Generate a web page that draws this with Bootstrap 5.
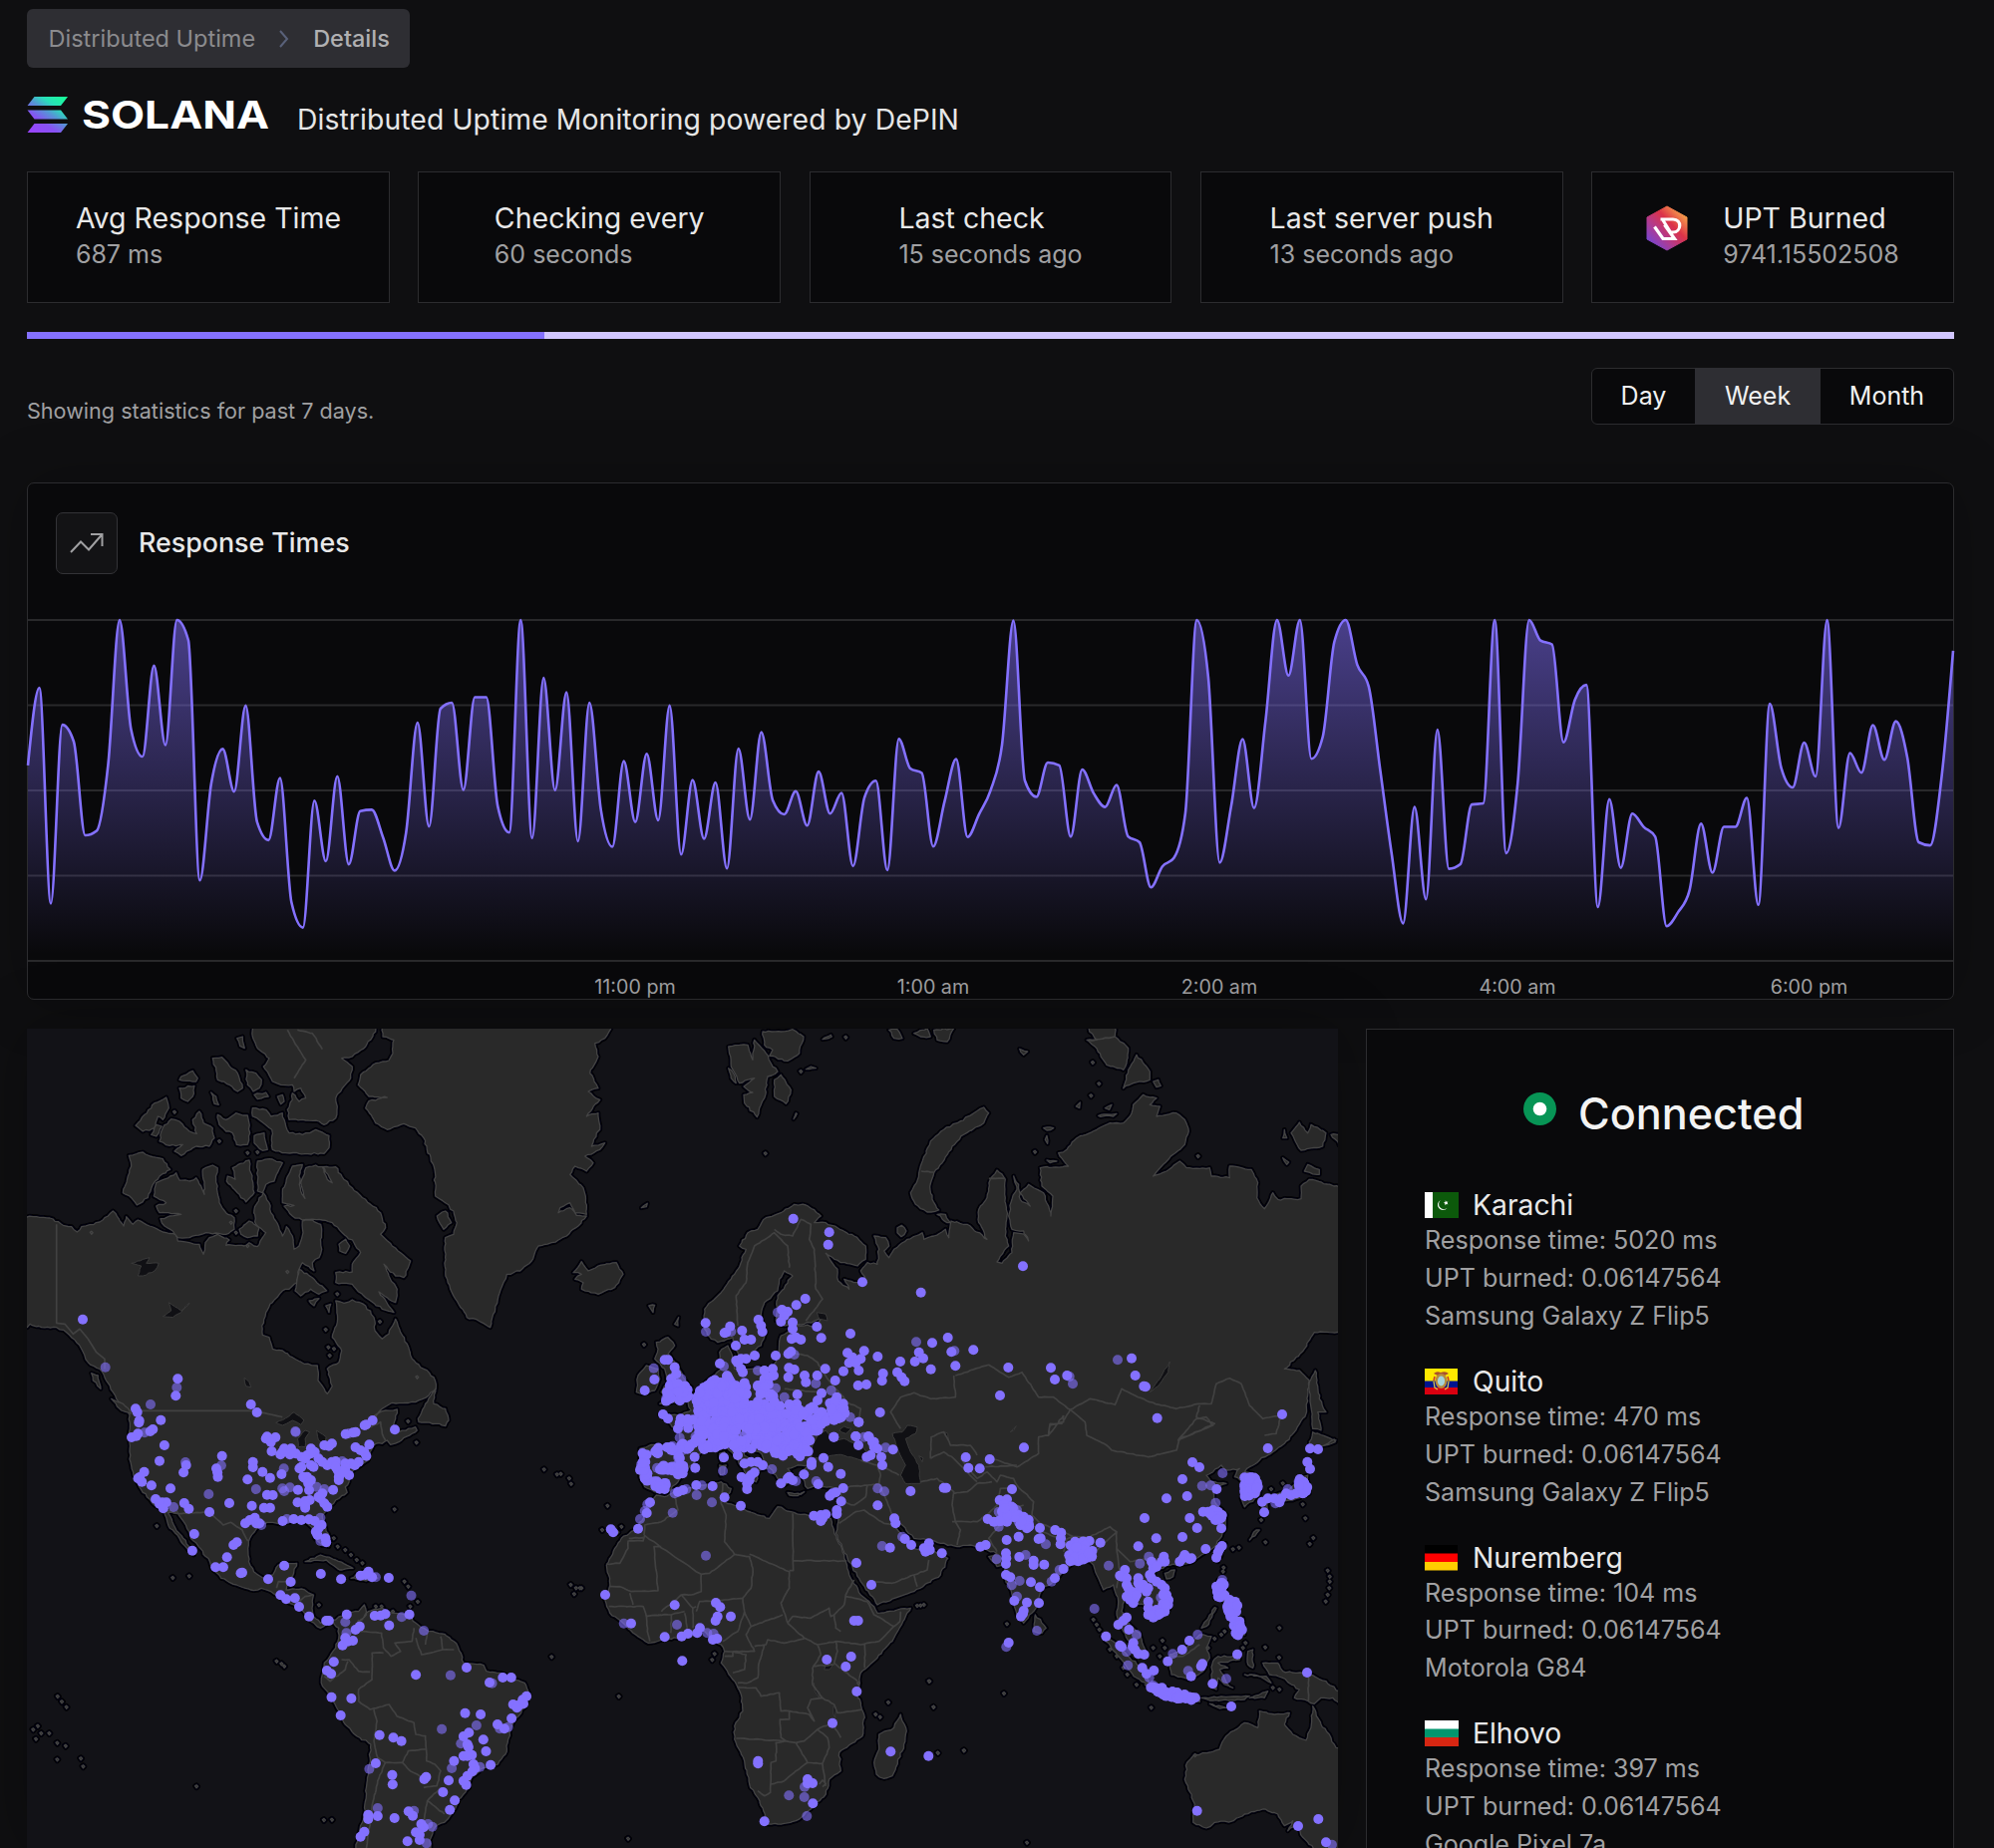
<!DOCTYPE html>
<html lang="en" data-bs-theme="dark">
<head>
<meta charset="utf-8">
<meta name="viewport" content="width=device-width, initial-scale=1">
<title>Distributed Uptime Details</title>
<link href="https://cdn.jsdelivr.net/npm/bootstrap@5.3.0/dist/css/bootstrap.min.css" rel="stylesheet">
<style>
:root{--line:#2c2c2f;--panel:#09090b;--violet:#8471ff}
body{background:#0f0f11;font-family:Inter,"Liberation Sans",sans-serif;height:1854px;overflow:hidden;color:#e6e6e6}
.page{padding:9px 40px 0 27px;height:1854px;overflow:hidden}
.crumbs{background:#2e2e33;border-radius:6px;height:59px;width:384px;padding-left:21.5px;font-size:23.5px;color:#8b8b8e}
.crumbs .here{color:#b0b0b2;font-weight:500}
.brand{height:48px;margin-top:24px}
.tagline{font-size:28.300px;line-height:48px;color:#e6e6e6;margin-left:28px;padding-top:4px;letter-spacing:.1px}
.stats{display:grid;grid-template-columns:repeat(5,1fr);gap:28.3px;margin-top:32px}
.stat{background:var(--panel);border:1px solid var(--line);height:132px;padding-top:28px}
.stat h2{font-size:28.500px;line-height:36px;font-weight:400;margin:0;color:#e8e8e8}
.stat p{font-size:25px;line-height:37px;margin:0;color:#a0a0a2}
.meter{height:7px;border-radius:0;background:#d1c6ff;margin-top:29px}
.meter .progress-bar{background:var(--violet)}
.filters{margin-top:29px;height:57px}
.filters .note{font-size:21.600px;line-height:30px;color:#a0a0a2;margin-bottom:-1px}
.ranges .btn{--bs-btn-font-size:25px;--bs-btn-color:#f1f1f1;--bs-btn-bg:var(--panel);--bs-btn-border-color:var(--line);--bs-btn-active-bg:#2e2e33;--bs-btn-active-color:#f1f1f1;--bs-btn-active-border-color:#2e2e33;--bs-btn-padding-x:0;--bs-btn-border-radius:6px;height:57px;border-width:1px}
.chartbox{background:var(--panel);border:1px solid var(--line);border-radius:7px;margin-top:58px;height:519px;box-shadow:0 0 60px rgba(0,0,0,.25)}
.chartbox .head{padding:29px 0 0 28px;height:137px}
.iconbox{width:62px;height:62px;background:#131315;border:1px solid #333337;border-radius:7px}
.chartbox h3{font-size:26.800px;font-weight:500;margin:0 0 0 21px;color:#e8e8e8;line-height:60px}
.plot{display:block}
.plot text{font-size:19.700px;fill:#a0a0a2;text-anchor:middle}
.lower{margin-top:29px;gap:28px}
.worldmap{width:1315px;height:822px;background:#121217;box-shadow:0 0 60px rgba(0,0,0,.3)}
.side{background:var(--panel);border:1px solid var(--line);width:590px;height:840px}
.side .status{height:68px;margin-top:50px;padding-left:156.500px}
.side .status span{font-size:43.200px;font-weight:500;margin-left:21.500px;color:#f3f3f3;line-height:68px}
.device{margin-left:58px;height:176.75px;color:#a0a0a2;font-size:25.100px;line-height:37.9px}
.device h4{font-size:28.300px;font-weight:400;line-height:34px;margin:0 0 0 14px;color:#e8e8e8}
.devices{padding-top:41px}
</style>
<script src="https://cdn.jsdelivr.net/npm/bootstrap@5.3.0/dist/js/bootstrap.bundle.min.js"></script>
</head>
<body>
<main class="page">
  <nav class="crumbs d-flex align-items-center">
    <span>Distributed Uptime</span>
    <svg width="12" height="20" viewBox="0 0 12 20" style="margin:0 23px 0 23px"><path d="M2 2l7 8-7 8" fill="none" stroke="#59617a" stroke-width="2"/></svg>
    <span class="here">Details</span>
  </nav>
  <header class="brand d-flex">
    <svg width="243" height="48" viewBox="0 0 243 48">
      <defs><linearGradient id="sol" gradientUnits="userSpaceOnUse" x1="8" y1="42" x2="34" y2="4"><stop offset="0" stop-color="#9945ff"/><stop offset=".3" stop-color="#8752f3"/><stop offset=".55" stop-color="#5497d5"/><stop offset=".75" stop-color="#28e0b9"/><stop offset="1" stop-color="#19fb9b"/></linearGradient></defs>
      <path fill="url(#sol)" d="M7.500 5H41l-7 9H.5zM.5 18.500H34l7 9H7.500zM7.500 32H41l-7 9H.5z"/>
      <text x="55" y="37" font-size="38.500" font-weight="700" fill="#fff" textLength="188" lengthAdjust="spacingAndGlyphs">SOLANA</text>
    </svg>
    <div class="tagline">Distributed Uptime Monitoring powered by DePIN</div>
  </header>
  <section class="stats">
    <div class="stat d-flex justify-content-center"><div><h2>Avg Response Time</h2><p>687 ms</p></div></div>
    <div class="stat d-flex justify-content-center"><div><h2>Checking every</h2><p>60 seconds</p></div></div>
    <div class="stat d-flex justify-content-center"><div><h2>Last check</h2><p>15 seconds ago</p></div></div>
    <div class="stat d-flex justify-content-center"><div><h2>Last server push</h2><p>13 seconds ago</p></div></div>
    <div class="stat d-flex justify-content-center">
      <svg width="42" height="46" viewBox="0 0 42 46" style="margin:5px 35px 0 0">
        <defs><linearGradient id="upt" x1=".1" y1=".9" x2=".85" y2=".1"><stop offset="0" stop-color="#7446d6"/><stop offset=".35" stop-color="#b33a8c"/><stop offset=".65" stop-color="#dc3348"/><stop offset="1" stop-color="#f7a04b"/></linearGradient></defs>
        <path d="M21 1l20 11v22L21 45 1 34V12z" fill="url(#upt)" stroke="url(#upt)" stroke-linejoin="round"/>
        <path d="M14.500 14H27c9.500 0 8.500 13 0 13h-2.500L17 15M8.500 21.500L17 33.500h11.500L18.500 19.500" fill="none" stroke="#fff" stroke-width="3.200"/>
      </svg>
      <div><h2>UPT Burned</h2><p>9741.15502508</p></div>
    </div>
  </section>
  <div class="progress meter"><div class="progress-bar" style="width:26.850%"></div></div>
  <section class="filters d-flex justify-content-between align-items-end">
    <div class="note">Showing statistics for past 7 days.</div>
    <div class="btn-group ranges" role="group">
      <button class="btn" style="width:105px">Day</button><button class="btn active" style="width:126px">Week</button><button class="btn" style="width:135px">Month</button>
    </div>
  </section>

  <section class="chartbox">
    <div class="head d-flex">
      <div class="iconbox d-flex align-items-center justify-content-center"><svg width="34" height="22" viewBox="0 0 34 22"><path d="M1 20L11 9.500l8 8L32.500 2M21 2h11.500v12" fill="none" stroke="#a0a0a2" stroke-width="2"/></svg></div>
      <h3>Response Times</h3>
    </div>
    <svg class="plot" id="plot" width="1931" height="380" viewBox="28 622 1931 380" overflow="visible">
      <defs><linearGradient id="fade" gradientUnits="userSpaceOnUse" x1="0" y1="622" x2="0" y2="957"><stop offset="0" stop-color="#8471ff" stop-opacity=".52"/><stop offset="1" stop-color="#8471ff" stop-opacity="0"/></linearGradient></defs>
      <path d="M28 622H1959M28 707.500H1959M28 793H1959M28 878.500H1959M28 964H1959" stroke="#29292b" stroke-width="2"/>
      <path id="area" fill="url(#fade)"/><path id="curve" fill="none" stroke="#8471ff" stroke-width="2.600"/>
      <text x="637" y="996.500">11:00 pm</text><text x="936" y="996.500">1:00 am</text><text x="1223" y="996.500">2:00 am</text><text x="1522" y="996.500">4:00 am</text><text x="1814.500" y="996.500">6:00 pm</text>
    </svg>
  </section>

  <section class="lower d-flex">
    <svg class="worldmap flex-shrink-0" viewBox="0 0 1315 822">
      <defs><filter id="soft"><feGaussianBlur stdDeviation=".6"/></filter></defs>
      <path id="halo" fill="none" stroke="#050507" stroke-width="4.800" stroke-linejoin="round" filter="url(#soft)"/>
      <g id="lands" fill="#292929" stroke="#444" stroke-width="1.300" stroke-linejoin="round"></g>
      <path id="lakes" fill="#101014" stroke="#3a3a3a"/>
      <path id="borders" fill="none" stroke="#414141" stroke-width="1.700" stroke-linejoin="round"/>
      <g id="pins" fill="#8471ff"></g>
    </svg>
    <aside class="side flex-shrink-0">
      <div class="status d-flex"><svg width="34" height="34" viewBox="0 0 34 34" style="margin-top:13px"><circle cx="16.500" cy="16.500" r="16.500" fill="#079455"/><circle cx="16.500" cy="16.500" r="6.800" fill="#fff"/></svg><span>Connected</span></div>
      <div class="devices">
        <div class="device"><div class="d-flex align-items-center"><svg width="34" height="26"><path fill="#fff" d="M0 0h8v26H0z"/><path fill="#0c590b" d="M8 0h26v26H8z"/><path d="M16 8a5.300 5.300 0 1 0 6.500 8a4.700 4.700 0 0 1-6.500-8z" fill="#fff"/><path d="M20.800 8.200l1 1.500 1.600-.3-.9 1.500 1 1.400-1.800-.3-1.200 1.200-.1-1.700-1.500-.7 1.700-.7z" fill="#fff"/></svg><h4>Karachi</h4></div>Response time: 5020 ms<br>UPT burned: 0.06147564<br>Samsung Galaxy Z Flip5</div>
        <div class="device"><div class="d-flex align-items-center"><svg width="34" height="26"><path fill="#ffe800" d="M0 0h33v13H0z"/><path fill="#00148e" d="M0 12.500h33v7H0z"/><path fill="#da0010" d="M0 19h33v7H0z"/><path d="M9 5q3-3 7-1q5-2 8 1l-4 2h-7z" fill="#a8502d"/><ellipse cx="16.500" cy="12.500" rx="6" ry="7.500" fill="#b68a3c"/><ellipse cx="16.500" cy="12.500" rx="3.600" ry="5" fill="#a5d3d8"/><path d="M10 8l-1 4M23 8l1 4" stroke="#c7372f" fill="none" stroke-width="1.500"/><path d="M9 13l1 6 3 2M24 13l-1 6-3 2" stroke="#d8c14a" fill="none" stroke-width="1.300"/></svg><h4>Quito</h4></div>Response time: 470 ms<br>UPT burned: 0.06147564<br>Samsung Galaxy Z Flip5</div>
        <div class="device"><div class="d-flex align-items-center"><svg width="34" height="26"><path fill="#000" d="M0 0h33v9H0z"/><path fill="#f00" d="M0 8.500h33v9H0z"/><path fill="#fc0" d="M0 17h33v8.500H0z"/></svg><h4>Nuremberg</h4></div>Response time: 104 ms<br>UPT burned: 0.06147564<br>Motorola G84</div>
        <div class="device"><div class="d-flex align-items-center"><svg width="34" height="26"><path fill="#fff" d="M0 0h34v9H0z"/><path fill="#00966e" d="M0 8.500h34v9H0z"/><path fill="#d62612" d="M0 17h34v9H0z"/></svg><h4>Elhovo</h4></div>Response time: 397 ms<br>UPT burned: 0.06147564<br>Google Pixel 7a</div>
      </div>
    </aside>
  </section>
</main>
<script>
/* hourly response times, smoothed with a monotone cubic */
const hours=[848,626,1243,732,780,1048,1035,845,432,745,823,563,790,432,490,1177,900,801,923,677,1010,1062,884,1240,1312,949,1122,879,1131,979,975,1055,1149,1040,726,1023,686,669,918,653,653,965,1040,432,1056,598,919,639,1065,669,975,1081,836,1010,815,1005,677,1103,890,1058,897,1143,800,1003,753,948,988,922,1020,866,986,927,1136,940,892,1148,772,857,870,1080,950,830,1053,988,920,790,434,892,938,840,848,1052,860,928,967,904,1051,1068,1197,1137,1113,985,432,595,1126,965,773,970,720,432,591,432,829,765,495,432,560,622,860,1100,1300,967,1231,746,1144,1131,960,957,432,1099,900,432,491,502,782,660,618,1253,945,1141,986,1024,1052,1308,1268,1205,1015,1155,1024,1024,941,1247,672,855,911,783,880,432,1027,813,869,733,832,722,825,1068,1077,880,520];
const ys=hours.map(v=>470.4+v/2.851),dx=1931/168,n=ys.length,sl=[],m=[];
for(let i=0;i<n-1;i++)sl[i]=(ys[i+1]-ys[i])/dx;
for(let i=1;i<n-1;i++){const a=sl[i-1],b=sl[i];m[i]=(Math.sign(a)+Math.sign(b))*Math.min(Math.abs(a),Math.abs(b),.25*Math.abs(a+b))}
m[0]=(3*sl[0]-m[1])/2;m[n-1]=(3*sl[n-2]-m[n-2])/2;
let c='M28 '+ys[0];
for(let i=0;i<n-1;i++){const x=28+i*dx;c+=`C${x+dx/3} ${ys[i]+m[i]*dx/3} ${x+dx*2/3} ${ys[i+1]-m[i+1]*dx/3} ${x+dx} ${ys[i+1]}`}
document.getElementById('curve').setAttribute('d',c);
document.getElementById('area').setAttribute('d',c+'V964H28Z');

/* map sheets: origin and scale of each survey sheet */
const sheet={A:[0,1020,3,3],B:[0,1420,2.6133,3],C:[500,1020,3,3],D:[580,1420,3,3],E:[900,1020,3,3],F:[920,1420,3,3]};
let seed=7;const rnd=()=>(seed=(seed*16807)%2147483647)/2147483647;
function pts(s){let k,out=[];for(const t of s.trim().split(/\s+/)){if(sheet[t]){k=sheet[t];continue}const f=t.endsWith('t'),[x,y]=t.replace('t','').split(',').map(Number);out.push([k[0]+x/k[2]-27,k[1]+y/k[3]-1032,f])}return out}
function rough(p,close,a){const o=[],L=p.length;for(let i=0;i<(close?L:L-1);i++){const u=p[i],v=p[(i+1)%L];o.push(u);const d=Math.hypot(v[0]-u[0],v[1]-u[1]),k=Math.min(12,Math.floor(d/3));for(let j=1;j<k;j++){const t=j/k;o.push([u[0]+(v[0]-u[0])*t+(rnd()-.5)*a,u[1]+(v[1]-u[1])*t+(rnd()-.5)*a])}}if(!close)o.push(p[L-1]);return o}
const dstr=(p,z)=>'M'+p.map(q=>q[0].toFixed(1)+' '+q[1].toFixed(1)).join('L')+(z?'Z':'');
const land=`A 70,602 110,602 150,606 190,628 215,632 232,648 245,632 270,626 300,618 325,600 340,585 352,600 372,630 380,602 400,625 415,612 450,630 490,648 528,655 535,675 570,680 600,685 612,715 618,680 630,665 655,655 690,672 680,688 735,690 750,680 775,692 790,665 800,650 770,625 765,580 780,545 792,530 810,560 815,590 830,615 850,660 862,632 880,660 885,700 900,690 912,650 910,615 940,612 965,625 968,700 960,725 940,740 945,765 910,740 900,760 893,800 870,820 850,825 820,860 800,890 788,930 790,958 810,965 820,1000 850,1005 880,1025 915,1045 955,1050 957,1095 985,1135 1000,1112 985,1060 1020,1040 1028,1005 1000,965 1015,920 1010,855 1035,862 1060,852 1100,870 1125,905 1128,945 1150,970 1170,955 1190,910 1205,950 1225,985 1240,1030 1275,1060 1305,1085 1312,1120 1290,1140 1250,1160 1180,1162 1150,1180 1120,1205 1160,1185 1195,1182 1190,1210 1180,1240 1200,1250 1250,1235 1255,1245 1200,1280 1175,1288 1165,1275 1150,1285 B 985,85 970,110 965,135 940,155 915,180 915,200 905,215 910,232 880,255 860,280 845,300 850,330 865,375 862,395 845,392 825,370 820,340 800,322 770,318 740,325 700,322 672,342 655,370 650,400 652,440 665,470 690,490 715,480 730,450 745,443 778,445 770,475 752,505 750,525 790,522 822,540 818,580 822,605 840,625 880,615 905,595 940,590 955,570 960,600 940,620 950,615 965,590 1000,580 1030,595 1070,600 1090,625 1125,650 1165,658 1190,680 1208,715 1215,745 1268,752 1275,770 1310,775 1340,790 1375,805 1388,840 1375,880 1345,925 1332,975 1325,1020 1305,1050 1260,1065 1235,1090 1230,1120 1200,1165 1180,1205 1165,1225 1140,1240 1130,1270 1125,1320 930,1320 938,1270 955,1200 960,1120 968,1050 972,990 935,965 905,930 885,885 868,850 842,805 845,780 850,745 865,725 880,700 888,670 888,640 870,620 840,640 815,620 795,590 770,570 735,550 710,530 685,520 665,527 620,510 580,490 555,460 550,440 525,400 500,370 490,340 475,310 465,290 440,292 460,340 480,370 500,400 508,420 490,400 465,360 445,340 430,290 400,265 385,245 365,215 350,180 342,140 340,100 338,60 340,0 A 385,1190 350,1150 340,1130 300,1060 265,1040 245,1000 230,980 200,950 170,935 125,935 90,925 70,940
A 388,418 430,408 460,422 490,428 512,460 480,480 460,505 445,545 412,567 395,545 370,530 385,480 395,450
A 470,500 512,480 530,470 540,492 570,495 590,485 605,510 615,535 610,460 640,447 655,455 650,490 660,560 680,590 705,605 705,640 680,655 620,650 570,665 535,665 520,645 495,630 483,608 510,600 545,595 480,590 470,570 500,560 463,540
A 480,375 490,335 515,308 540,315 570,345 592,352 580,310 600,285 612,320 640,335 645,365 630,390 590,390 545,418 525,405 550,385 510,388
A 408,328 435,295 465,260 500,243 508,275 490,310 475,300 465,335 430,345
A 545,180 580,163 595,185 590,195 540,190
A 540,215 585,208 580,240 565,255 545,245
A 640,125 668,122 690,148 715,170 730,215 715,225 690,205 655,190 650,160
A 740,160 770,170 787,190 780,215 762,225 745,205
A 765,235 800,228 808,240 775,248
A 635,228 650,240 658,265 645,262
A 835,240 850,235 855,255 845,263
A 713,65 730,60 736,95 722,88
A 655,295 680,310 710,290 745,297 752,350 745,385 712,385 700,350 680,345 660,325
A 765,358 795,350 805,400 790,403 765,380
A 455,355 470,325 487,330 470,360
A 760,275 800,280 815,300 850,290 860,330 870,350 910,355 950,340 990,358 990,395 975,412 900,412 850,410 820,400 818,340 790,318 760,300
A 760,20 760,60 775,95 810,125 793,150 820,195 845,205 880,205 885,225 905,215 920,245 900,255 880,230 880,250 865,280 870,310 920,312 960,315 975,325 1010,305 1015,270 1010,245 1030,215 1055,185 1060,150 1028,125 1060,120 1100,90 1130,45 1130,20
A 775,435 810,428 850,440 825,495 800,505 790,530 775,525
A 700,455 750,432 755,470 765,530 740,557 715,530 682,495 685,480 708,490
A 862,490 880,450 910,445 900,480 905,525 918,547 905,500 920,455 950,447 970,452 985,490 1000,500 972,452 1010,452 1035,490 1060,515 1100,550 1145,590 1160,635 1145,655 1180,690 1235,735 1215,785 1190,780 1155,745 1170,780 1195,820 1190,860 1140,828 1185,890 1150,880 1100,845 1060,805 1010,800 1010,770 1060,768 1060,745 1085,710 1065,680 1030,650 1000,620 960,610 910,612 880,600 855,570 885,568 850,560 850,530
A 888,825 900,760 940,785 983,825 960,835 935,820 905,840
A 930,855 960,848 945,870
A 980,870 995,865 990,890
A 720,640 750,615 780,635 775,660 745,665 725,655
A 1020,685 1040,670 1052,690 1040,712 1022,705
A 1258,1210 1280,1165 1310,1120 1305,1165 1340,1180 1350,1215 1340,1232 1310,1225 1260,1220
A 335,1150 370,1165 395,1195 365,1185
A 275,1073 295,1080 303,1120 280,1095
A 1150,20 1152,60 1185,70 1182,110 1170,132 1130,140 1085,175 1078,205 1110,240 1165,243 1110,254 1100,275 1130,320 1165,340 1215,322 1250,335 1275,365 1285,400 1308,460 1310,540 1340,560 1365,585 1375,620 1365,655 1340,665 1340,770 1355,820 1380,865 1405,905 1440,915 1475,935 1490,880 1500,840 C 15,800 25,775 65,765 100,735 120,690 160,680 205,660 240,630 265,600 235,598 215,575 180,590 185,575 215,560 230,590 265,595 262,540 255,515 215,475 230,450 265,465 285,440 260,420 305,400 320,380 280,390 295,350 305,340 300,290 265,300 305,250 270,225 300,215 275,170 300,120 290,80 320,65 345,20
A 1315,600 1340,585 1358,620 1335,640
C 225,770 250,737 270,765 300,750 355,740 375,775 350,815 300,835 250,820 255,800 230,790 250,775
C 692,90 725,85 750,85 765,130 770,70 805,110 820,140 840,165 810,180 800,245 785,275 778,302 740,260 738,235 765,228 738,210 770,185 725,200 700,150
C 795,45 850,45 885,38 918,60 905,110 870,133 815,118 825,100 800,85
C 830,190 850,175 880,220 865,262 830,240
C 692,155 712,180 715,200 700,185
C 430,575 448,562 445,572
C 975,68 1000,55 1003,60
C 888,308 895,290 898,292
C 925,158 940,150 955,155
C 1175,40 1200,38 1215,65 1190,65
C 1250,50 1290,35 1300,60 1270,60
C 1310,40 1370,35 1350,75 1320,70
C 1270,450 1300,375 1340,340 1380,320 1430,290 1460,273 1475,290 1460,320 1400,355 1365,390 1335,440 1310,470 1298,510 1305,550 1325,582 1290,588 1255,565 1240,530 1258,500 1265,470
C 1200,635 1213,628 1227,645 1212,662 1200,650
C 470,1030 480,1000 475,980 510,965 530,990 510,1015 540,1045 555,1085 580,1115 575,1140 545,1160 485,1165 510,1145 490,1130 510,1100 500,1060
C 415,1130 420,1080 445,1050 480,1060 485,1090 470,1125 430,1135
C 452,870 470,868 465,890
C 530,925 542,905 540,930
C 725,690 750,650 780,640 805,605 850,590 890,565 925,567 970,600 950,620 985,620 1020,635 1070,660 1105,690 1105,730 1080,750 1030,740 985,712 1000,735 1020,760 1022,795 1055,820 1040,790 1080,800 1110,800 1090,765 1110,740 1140,745 1145,700 1130,660 1165,665 1175,690 1160,705 1175,725 1190,700 1230,670 1275,650 1280,670 1310,660 1345,640 1355,665 1362,615 1410,625 1470,670 E 245,620 245,580 270,545 280,490 300,462 325,490 325,545 330,600 325,660 335,690 300,738 315,742 345,710 350,650 385,655 395,675 380,645 345,640 335,600 345,550 360,520 350,480 365,505 370,550 400,570 370,530 395,505 440,530 455,570 462,600 468,540 435,510 430,455 515,450 485,410 510,400 540,365 600,340 640,320 680,320 700,300 710,265 740,235 780,245 760,265 790,270 780,300 840,290 865,310 877,345 865,385 830,415 800,445 770,480 810,465 850,435 870,455 940,455 945,480 1000,485 1000,450 1065,460 1085,500 1082,545 1105,578 1130,530 1145,550 1215,548 1215,510 1240,490 1330,513 1345,515 1345,950 1300,950 1255,950 1225,1000 1165,1060 1210,1065 1240,1095 1235,1140 1230,1195 1195,1250 F 1105,85 1070,110 1030,135 1000,155 985,170 1010,175 1030,215 1030,240 985,275 975,250 980,200 955,185 970,160 930,165 915,150 890,170 870,180 885,200 930,205 890,220 895,260 930,300 925,345 900,390 870,410 830,440 790,450 750,450 740,460 715,460 710,490 745,520 765,565 755,590 710,615 690,600 685,570 650,570 625,550 615,590 640,630 670,655 690,720 660,715 620,650 600,600 605,560 590,510 560,525 545,490 530,450 510,435 470,445 440,465 415,500 375,520 365,560 345,595 320,625 300,600 285,540 265,490 265,450 240,455 215,425 240,415 210,405 160,390 120,395 70,385 D 1060,375 1010,370 975,330 950,305 945,330 985,370 1005,400 1045,405 1060,380 1070,410 1112,430 1090,480 1010,530 900,570 885,545 850,500 810,430 775,355 780,330 785,290 790,220 740,215 715,210 690,220 670,180 690,150 660,150 630,160 650,190 620,210 595,180 570,150 545,110 520,100 500,85 480,75 500,120 550,150 570,160 545,165 535,200 510,180 470,120 440,90 400,90 370,110 350,140 320,170 300,200 270,230 230,230 200,215 185,185 185,100 220,88 280,95 310,90 305,50 270,20 245,0 C 485,1195 540,1200 580,1185 570,1160 600,1120 640,1085 670,1060 665,1010 690,990 700,1010 710,1060 760,1060 830,1055 840,1020 850,960 880,945 900,940 880,930 960,930 970,910 920,925 860,930 835,915 840,840 885,780 860,765 845,790 840,825 800,860 790,905 805,950 790,990 760,1010 740,1040 720,1010 705,965 660,980 640,970 620,940 620,880 670,830 700,790 720,760 745,700
D 235,240 210,260 200,300 170,345 130,370 110,400 85,450 95,490 92,540 75,545 95,595 130,620 165,655 210,685 260,675 310,668 370,640 400,670 430,690 440,710 430,745 465,795 490,840 495,890 470,935 470,975 500,1040 515,1110 540,1150 562,1200 560,1230 600,1230 655,1220 700,1185 745,1140 755,1095 790,1070 785,1015 855,965 860,900 840,840 850,775 900,730 950,670 1000,580 960,585 900,595 890,575 850,540 815,480 800,420 770,355 760,310 720,310 690,300 640,290 600,275 575,310 540,300 490,280 440,260 460,220 430,200 380,210 300,225 260,245
D 970,900 988,950 975,1010 945,1085 920,1093 897,1080 890,1045 905,1005 905,960 950,940
D 425,115 440,110 442,135 430,140
D 425,150 445,150 440,175 428,180
D 630,232 670,238 680,230 660,242 635,240
D 492,182 530,178 518,200
F 830,1025 910,1005 930,965 985,925 1025,940 1030,890 1075,900 1120,895 1105,930 1130,960 1170,978 1185,940 1190,875 1215,930 1240,960 1260,1000 1300,1010 1300,1320 1200,1310 1160,1270 1140,1230 1115,1250 1130,1220 1105,1235 1085,1200 1040,1185 985,1200 945,1222 895,1225 870,1242 830,1225 835,1170 805,1095 812,1045
F 1040,745 1085,745 1100,770 1180,780 1230,800 1290,850 1290,880 1250,850 1215,850 1195,868 1165,855 1135,850 1150,825 1100,790 1060,780
F 755,740 760,720 800,710 850,660 885,665 870,700 880,730 860,770 825,795 765,780
F 555,665 590,680 640,730 690,770 695,810 660,790 610,730
F 685,810 740,815 850,850 850,862 740,845
F 855,850 1000,845 985,855 880,858
F 1000,850 1055,830 1045,850
F 880,868 930,880 910,882
F 885,780 890,740 905,725 970,725 970,735 905,745 935,760 910,765 935,810 950,820 925,810 905,790 900,825 890,820
F 905,495 930,500 925,560 895,550
F 950,620 980,610 985,660 950,660
F 855,640 895,578 900,580 870,635
F 995,710 1010,705 1010,760 995,750
F 985,780 1050,785 1065,805 1030,785
F 355,600 388,640 375,655 350,650
F 745,475 775,465 770,485 750,492
F 895,435 915,385 928,385 905,440
F 1150,190 1175,180 1180,235 1130,255 1050,262 1060,245 1120,225
F 1190,50 1260,75 1215,95 1185,110 1180,80
F 1225,90 1255,72 1258,80
F 1030,260 1055,260 1050,300
F 1000,375 1020,345 1030,345
E 1240,1100 1258,1065 1270,1150 1290,1190 1265,1190 1275,1245 1250,1240
E 575,20 578,45 600,70 570,70 600,95 630,145 680,160 690,140 695,95 655,60 655,20
E 680,215 695,160 720,115 760,165 760,190 710,200
E 770,195 785,190 793,208 780,212
E 1185,350 1210,318 1235,350 1245,325 1290,350 1280,390 1215,402
E 1225,465 1235,445 1270,460 1270,475
E 1305,355 1345,350 1345,400
E 1160,365 1165,340 1172,365
E 1160,425 1178,438 1172,445
E 368,97 392,105 380,115
E 440,335 470,335 450,342
E 445,370 450,358 452,382
E 450,432 480,435 460,440
E 625,275 645,265 638,280
E 605,298 660,292 650,300
E 538,270 550,258 548,275
E 120,595 145,595 160,620 150,620
B 800,440 840,420 880,435 925,460 890,465 855,435
B 920,490 950,470 990,490 960,498`.split('\n');
/* tiny islands */
const specks=`A 275,650 525,287 660,375 745,410 775,408 695,620 710,585 710,650 745,690 865,768 1015,835 1143,918 980,942 988,995 992,1020 1005,1000 1255,1085 1228,1218 1253,1282 B 411,333 453,489 496,484 1034,283 1426,163 1460,178 1470,176 1492,190 1497,206 1496,510 1510,520 1524,520 1505,538 1446,727 725,740 738,748 745,755 151,846 162,862 174,878 99,935 87,946 108,957 129,957 94,974 150,986 172,995 150,1036 212,1033 218,1057 515,1117 849,1218 870,1217 836,571 1095,561 1060,500 1070,515 875,370 885,395 905,405 920,420 935,435 950,445 985,575 1000,575 1030,590 1075,575 C 803,412 1045,62 910,165 438,987 D 88,272 72,345 130,335 118,352 5,520 122,846 150,1274 410,718 403,736 1055,800 933,864 1069,878 895,900 908,908 1082,1016 1160,1009 1020,573 1040,570 843,806 E 607,202 583,238 414,407 905,420 588,138 F 270,628 10,572 37,800 49,878 261,837 62,1016 141,1009 330,1286 704,880 660,811 1047,698 1089,729 1090,640 1048,382 1181,387 1192,369 1168,310 1235,467 1241,485 1241,500 1240,520 1235,540 1229,560 530,615 540,630 548,645 580,705 600,725 620,760 632,780 738,678 745,700 710,700 730,725 988,685 980,700 875,700 895,672 915,660 925,650 1070,820 1090,825 836,1023 922,458 920,470 950,403 968,398 1100,205 1160,268 1065,222 1035,315`;
let halo='',g='';
land.forEach(s=>{const d=dstr(rough(pts(s),true,1.7),true);halo+=d;g+=`<path d="${d}"/>`});
pts(specks).forEach(p=>{const d=dstr([[p[0]-1.5,p[1]-.5],[p[0],p[1]-1.5],[p[0]+1.5,p[1]],[p[0],p[1]+1.5]],true);halo+=d;g+=`<path d="${d}"/>`});
const put=(id,d)=>document.getElementById(id).setAttribute('d',d);
put('halo',halo);document.getElementById('lands').innerHTML=g;
put('lakes',`A 395,742 450,725 440,742 478,742 465,765 430,780 415,780 425,750
A 508,860 545,885 570,862 545,890 520,905 490,902 515,885
A 735,1087 750,1100 755,1115 740,1112
A 830,1222 860,1208 885,1190 915,1215 905,1228 880,1215 850,1230
B 782,95 780,70 800,45 812,50 800,70 800,95
B 830,45 855,65 850,85 835,75
D 700,130 705,90 720,60 745,45 770,75 800,70 860,100 880,130 850,135 790,118 740,125
D 785,45 800,33 822,40 805,55
D 945,55 975,50 990,30 1020,35 1015,55 985,70 1000,110 1025,150 1030,205 985,205 970,180 985,150 965,110
D 1102,50 1112,55 1112,75
D 1025,122 1038,128 1035,140
D 745,750 765,750 755,765 740,765
D 708,805 725,850 712,830
D 768,875 776,880 773,910 768,900
E 820,1038 815,1070 790,1105 760,1130 790,1090
E 340,1250 358,1232 350,1245
C 958,890 985,895 990,915 965,910`.split('\n').map(s=>dstr(rough(pts(s),true,1),true)).join(''));
put('borders',`A 170,625 170,922 195,925 220,955 240,940 265,970 290,1010 315,1030 315,1060
A 395,1186 760,1186 805,1195 850,1205
A 1115,1235 1145,1220 1150,1255 1160,1275
A 865,40 895,90 920,130 885,185
A 895,40 940,50 970,98
B 430,285 465,295 550,292 585,330 605,322 635,345 650,378
B 725,520 730,500 750,500
B 775,570 800,545 820,540
B 940,615 930,650 945,650 1000,655 1005,700 1025,725 1050,710 1035,685 1080,680 1085,640
B 1090,670 1105,720 1160,705 1190,705
B 1115,690 1120,655
B 1160,705 1155,665
B 895,735 915,735 940,770 970,772
B 850,785 865,800 905,765 912,740
B 1005,715 975,715 975,795 940,825 940,860 970,885 1020,870 1040,905 1085,925 1090,960 1115,965 1118,1040 1140,1050 1155,1070 1145,1115 1110,1120
B 980,885 988,920 980,980 990,1030 1010,1045 1055,1045 1070,1010 1115,1005
B 1055,1045 1075,1070 1110,1090
B 1010,1045 990,1100 975,1180 960,1310
B 1155,1120 1120,1160 1165,1200
B 1120,1160 1110,1230
C 720,930 715,840 745,800 750,740 770,690 830,650 870,690 875,755
C 830,640 850,655 885,660 910,610 940,625 935,670 950,700 955,820 975,850 925,915
C 870,1010 930,1020 960,1040 990,1090 1050,1160 1090,1180 1085,1220
C 860,1120 960,1130
C 1210,1240 1180,1190 1210,1145 1250,1132 1300,1150 1375,1145 1370,1080
C 1272,465 1310,468
D 200,360 195,378 150,378 150,400 125,445 85,447
D 290,245 300,285 250,320 200,330 198,360
D 200,362 355,470 370,478 395,475 470,418 440,380 445,300 430,265 435,205
D 195,368 152,370
D 240,395 228,395 240,528 160,530 125,515 95,515
D 230,395 250,395
D 370,478 370,530 340,540 310,540 250,590
D 310,540 345,580 355,575
D 470,418 515,425 525,460 520,520 495,550 450,555 365,560 355,590
D 515,418 635,470 635,520 610,565 630,625
D 615,600 520,635 500,590 495,550
D 645,295 647,467 635,467
D 647,437 808,438
D 830,495 805,540 800,570 770,600 775,640 790,650
D 630,625 645,605 700,610 755,580 760,605 770,600
D 630,625 680,670 720,690 775,680 850,690 870,685 905,680 950,635 890,600 870,560 805,545
D 970,590 968,620 950,635
D 520,635 505,660 530,710 440,710
D 530,695 565,690 560,690 545,740 540,790 510,805 480,805
D 565,690 570,675 620,685 680,672
D 440,725 465,725 465,710
D 465,775 500,765 505,720 465,710
D 480,818 535,820 550,845 605,835 610,890 635,890 635,915 607,915 610,970 625,980 475,972
D 635,890 695,900 710,920 690,880 700,855 735,850
D 720,690 730,720 705,760 705,810 735,850 770,870 780,895 855,885
D 705,755 770,750
D 775,680 780,710 770,745 840,800
D 862,690 862,760
D 625,980 595,985 595,1040 580,1045 578,1135 560,1145 540,1130
D 580,1110 620,1100 655,1070 690,1045 655,985 625,980
D 690,1045 735,1048 755,1000 750,970 720,945 765,925 790,970
D 735,1048 745,1115
D 655,985 680,980 720,945
D 725,1110 735,1098 745,1108 735,1118
D 280,600 278,655
D 240,600 280,600 320,590
D 320,595 330,650
D 345,580 345,640
D 205,600 208,650 215,680
D 92,575 195,575 205,605 250,600
D 155,535 165,570
D 500,590 480,650 435,680
D 785,325 835,290 860,285 920,325 945,330
D 790,260 830,270 865,245 870,210
D 890,500 945,505 1010,480 1050,465 1055,435
D 1010,480 1020,515
D 790,218 870,210 905,205 910,180 900,150 850,135
D 905,205 925,250 945,300
D 910,150 965,180
D 1030,200 1080,190 1130,230 1125,270 1135,320 1150,345 1140,390
D 1130,235 1170,230 1200,205 1245,200
D 1060,130 1062,65 1100,50 1120,90 1180,90 1200,120
D 1060,130 1100,110 1130,130 1160,160 1200,200
F 105,320 180,320 215,295 240,270 250,220 285,220
F 130,130 180,190 210,170 240,200 250,180 290,190 300,210 350,260 345,300 370,325 410,340 470,365 520,365 580,335 600,350 600,400 640,440 700,430 720,440
F 225,130 300,155 365,115 365,65 395,60 400,30 440,20 440,0
F 205,155 300,150
F 240,410 215,370 240,340 290,280 320,270
F 370,330 375,350 440,375 470,365
F 440,410 450,370
F 525,440 535,410 600,350
F 600,400 610,470 600,520
F 440,0 E 455,1260 460,1225 495,1225 520,1183
F 1177,785 1177,860
F 760,725 800,725 850,690
E 175,1080 275,1048 335,1085 375,1070 425,1145 470,1145 520,1183 580,1150 655,1168 675,1120 715,1140 760,1160 840,1180 905,1165 945,1165 960,1105 1000,1088 1035,1105 1060,1170 1100,1210 1155,1200 1140,1255 1105,1260
E 520,1183 565,1220 570,1260 630,1290 F 585,105 695,125 780,105 790,70 890,30 870,5 840,10 E 845,1275 880,1260 955,1225 900,1205 910,1170
E 580,72 655,60
E 275,487 325,487`.split('\n').map(s=>dstr(rough(pts(s),false,s.startsWith('A 395')||s.startsWith('A 170')?0:.9))).join(''));

/* probe locations; a trailing t marks a dimmed pin */
let pins=pts(`A 249,911 317,1055t 535,1090 532,1116t 529,1141 453,1167t 755,1167 773,1191 408,1180 413,1190 419,1216 418,1222 484,1214 460,1242 452,1248 435,1252t 415,1255 410,1262 396,1266 889,1248t 1121,1215 1097,1230 1102,1228 1040,1256 1050,1254t 1062,1252 1070,1250 1188,1243
B 431,90 418,137 486,141t 488,150 481,172 582,122 580,151t 567,160 570,172 571,185 378,170 366,186 372,200 362,190 397,211 447,220 408,252 425,262 436,262 418,266 428,280 455,276t 483,264 495,281 547,237t 549,291 601,264 663,140 663,156 688,170 708,188 649,193 671,222t 744,160t 738,177 700,239 715,240 740,220t 745,228t 760,217t 781,224 775,50t 700,64 697,70 722,66 710,80 712,108 735,118 745,100 763,100 740,110 760,118 775,115 790,125 805,120 815,100 825,110 815,115 815,150 790,155 800,130 785,160 795,185 805,185 800,190 815,195 808,205 822,155 835,130 845,140 858,150 870,140 880,138 897,138t 905,145 920,145 940,140 960,122 955,110 932,96 968,88 945,105 850,90 870,85 862,92 885,165 905,160 915,180 890,180 888,195 888,185 900,170 930,150 880,155 810,225 830,215t 850,222t 845,235 873,224 840,250 850,265 858,275 835,245 780,262 800,258 812,255 800,278 800,270 660,272 692,278 708,278 643,325 655,315 668,308 672,325 680,325 685,330t 741,318 770,312 790,315 810,313 825,318 843,330 752,312t 828,350 835,340 832,360 853,370 855,382 840,308t 840,378t 509,357 504,407 621,382 612,390 595,427 565,457 585,457 631,475 635,473 703,493 745,452 762,501 841,477 894,493 945,482 966,470 975,487 985,487t 958,480 1019,489 1078,542t 735,541 750,553 773,550 784,576 810,605 855,618 862,618 909,599 905,622t 982,603 998,602 1010,598 1020,632 1053,607t 1073,599 1111,648t 943,635 932,645 908,655t 905,670 898,692 912,680 925,678 875,742 857,768 868,778 869,848 921,852 893,903 1090,781 1181,782t 1223,759 1283,804 1290,806t 1318,789 1340,789 1380,845 1372,868 1345,870 1355,880 1360,872 1370,856 1341,912 1304,930 1310,943t 1322,943 1332,938t 1219,896 1260,900 1249,933t 1158,944t 995,962 1031,970 1052,980 1229,955 1215,966 1267,976 1208,988t 1225,990 1228,998 1274,1011 1237,1022 1215,1025 1225,1025 1190,1040 1184,1062t 1241,1050 1245,1062 1286,1052 1258,1058t 1238,1072 1225,1085 1215,1100 1222,1112 1176,1099 1161,1134 1192,1159 1179,1187 985,1047 968,1064t 1028,1082 1029,1111 1117,1088 1112,1095 990,1182t 965,1202 990,1206 965,1215 1034,1212 1071,1192 1085,1190t 1082,1205 1104,1230 1110,1240 1133,1238t 1122,1230t 1090,1255 1100,1262 1100,1278 955,1253 945,1268 1068,1282 1118,1288t
C 887,608 995,649 992,686 1095,799 1271,830 923,849 896,868 853,882 840,890t 870,888 860,900 850,918 885,920 885,940 882,970 910,972 895,965 623,922 624,948t 782,912 790,930 794,948 697,932 685,950 680,952 700,948t 733,945 740,972 760,972 714,990 958,933 971,967 1059,954 1352,966 1257,979t 1305,982 1429,1003 1363,1009 1372,1006t 1375,1051 1301,1061 1265,1010 1278,1028 1253,1038 1209,1038 1141,1023 1100,1006 1050,1012 1065,1025 1090,1030 1055,1042 1075,1042 1038,1067 1084,1065 1157,1074 1154,1096 1200,1070 1213,1085 1222,1097 1107,1107 1082,1110 1148,1191 834,1020 880,1008 872,1015 890,1017t 771,1020 666,1044 678,1052t 715,1035 730,1030 745,1030 720,1042 730,1060 735,1070 874,1057 890,1062 872,1085 921,1080 925,1100 955,1104t 959,1080 983,1060 1013,1095 1001,1125t 972,1133 1018,1145 960,1155 899,1137 860,1145t 1037,1165 500,1033 510,1033 530,1055 535,1075 520,1090 550,1090t 467,1058t 469,1092 440,1125 495,1197 510,1210 548,1210 540,1240 545,1225 545,1267t 1084,1220 1058,1205t 1009,1265 1075,1263 1100,1265t 1115,1265 1130,1280 780,1065t 800,1065 825,1060 828,1080 815,1085 800,1090 780,1110 790,1130
D 438,127 435,167t 583,162t 352,158 350,125 355,210 372,211t 404,213 356,240t 402,262t 440,247 489,272 290,235t 300,230 315,225 325,222t 216,262 208,268t 200,288t 206,294 186,312t 180,341 284,293t 98,343 105,352 384,422t 81,540 290,571 414,564 427,577 459,605 419,605 413,618 297,630t 159,626 137,626t 260,667 311,665 330,657 358,655 366,640 388,655t 407,657t 405,675 418,672 313,739 748,735 821,726 805,756 838,831 765,926 830,618 842,618 837,444 882,510 938,398 914,393t 541,1040 541,1048 690,1095 705,1107 690,1108 681,1118t 680,1149t 634,1144t 706,1168 688,1206t 560,1222 940,1012 1054,1025 901,220t 921,229t 901,271 1000,228 1100,218 1107,218 951,310 955,325 975,365t 983,372 1002,390 1055,385 1040,400 1058,405 1045,410 1094,415 1166,126 1174,158 1208,160 1238,132 709,302 730,300 745,298 730,318 735,310 778,285 778,297 791,259 797,219 765,235 757,242 775,232 790,176 752,155 738,128 702,140 702,150 679,178 716,198t 722,207 610,205 630,190 645,195 635,185 655,198t 491,186 510,190 520,180 530,172 508,205 508,222 515,195 769,65 844,20 835,63 843,90 873,63 885,80 890,95 900,100 868,125 880,120 912,125 915,150 925,97t 947,103 520,140 540,140 555,150 480,120 500,145
E 378,751 334,1056 309,1140 462,1057 474,1092 511,1080 518,1083t 528,1105t 663,1033t 705,1028 716,1080 742,1112 747,1114 782,1208 1158,1197
F 321,97 1055,99 1182,100 1206,102 1174,140 1182,161 1151,192 828,141 849,156 919,174t 798,192 857,212t 883,211t 901,222 812,243 750,250 898,263t 684,309 820,309 842,339 860,290 875,290 890,285 905,290 917,300 897,315 915,340 798,366 719,370 665,394 868,402 790,440 800,430 805,420 820,432 825,430 917,393 910,402 905,412 900,428 742,425 745,440 735,440 697,425t 670,446t 285,222 248,255 270,253 265,265 275,275 285,285 265,285 245,290t 212,312 230,320 245,318 258,315 270,320 245,335t 280,300 270,300 305,300 300,285t 320,305 335,315 310,328 330,340 325,330 369,339 371,370 365,372 387,388t 415,345 433,353 432,370 431,388 305,365 269,375 190,395 206,390 239,433t 267,415 268,430 267,447 307,426 326,420t 350,437 350,450 382,449 267,480 280,487 284,511t 308,498t 342,502 369,517 404,500t 414,490 440,462 428,465t 300,545t 292,558 330,563 366,565 320,588 312,605 318,597 360,648t 275,684 268,697t 533,582t 576,452t 551,383 518,378 568,665 605,630 620,618 630,608 637,645 660,660t 650,685 648,695 610,692 615,697 630,712t 655,705 665,718 683,720 634,752t 677,760 690,778 712,768 698,790t 844,660t 819,678 797,705 769,718t 754,740 858,748 854,755 815,769t 824,785 889,808 930,793t 963,719 945,876 1173,774 842,1190 1207,1215 1146,1236 1230,1285 1248,1292t 1044,292 1038,260 1055,250 1078,265t 1075,250 1090,262 1095,250 1115,222t 1110,235 1125,240 1140,235 1155,215 1160,235 1170,228 1165,205 918,495t 918,508 900,515 905,530 905,545 920,512 940,555 935,570 935,585 945,600 960,590 950,610 970,620 965,640 965,658 625,465 615,485 610,482 630,490 635,520 630,510 630,545 650,565 655,550 640,555 665,490 680,510 690,530 670,520 665,505 695,520 705,440 710,460 720,455 700,480 705,490 720,500 735,510 745,520 750,540 755,555 755,570 740,575 745,590 725,600 710,608 695,600 695,580 695,560 715,600 645,530 660,540 733,548t 720,585`);
/* metropolitan clusters: [outline, count] */
const inside=(p,x,y)=>{let r=false;for(let i=0,j=p.length-1;i<p.length;j=i++){if((p[i][1]>y)!==(p[j][1]>y)&&x<(p[j][0]-p[i][0])*(y-p[i][1])/(p[j][1]-p[i][1])+p[i][0])r=!r}return r};
[['C 505,1100 560,1105 578,1125 572,1155 495,1158 510,1120',36],
['C 590,1140 640,1090 690,1080 705,1100 700,1180 650,1195 600,1190',100],
['C 600,1185 700,1180 840,1160 960,1170 1030,1190 970,1235 940,1300 600,1300 560,1290 620,1240',215],
['C 700,1090 745,1095 750,1170 780,1170 780,1110 835,1090 840,1160 780,1210 700,1200',56],
['C 1000,1150 1040,1165 1045,1200 1010,1215 990,1190',24],
['D 290,10 330,40 420,80 440,65 400,10',22],
['D 390,20 470,10 500,100 470,105 430,80',30],
['D 470,5 560,5 560,60 500,60',24],
['D 640,20 690,30 690,110 650,110 620,60',32],
['D 560,60 700,90 690,130 610,145 570,110',30],
['D 265,95 340,80 400,95 390,105 350,95 300,110 270,110',20],
['D 190,110 210,110 210,200 185,180',22],
['D 225,105 245,95 240,115',5],
['D 230,150 290,145 290,170 250,180',13],
['D 225,195 275,205 260,222 235,222',16],
['D 295,110 310,120 320,170 300,195',14],
['F 442,405 480,372 515,385 540,408 520,435 460,442',38],
['F 982,185 1018,180 1028,230 985,250',46],
['F 695,808 745,822 850,852 845,860 760,850 700,822',40],
['F 865,285 900,285 925,300 910,320',8],
['F 300,310 335,310 340,335 310,335',10],
['F 895,510 925,500 925,550 905,555',14],
['F 925,560 960,560 970,590 940,610 925,590',14],
['F 945,610 980,615 978,655 960,665',12],
['F 255,265 285,265 310,300 275,320 240,320',14],
['F 735,505 760,540 760,575 740,600 700,612 690,600 735,570 740,540',16],
['F 1145,200 1170,200 1178,230 1145,240',10]].forEach(([s,k])=>{const p=pts(s),X=p.map(q=>q[0]),Y=p.map(q=>q[1]),x0=Math.min(...X),x1=Math.max(...X),y0=Math.min(...Y),y1=Math.max(...Y);
 while(k>0){const x=x0+rnd()*(x1-x0),y=y0+rnd()*(y1-y0);if(inside(p,x,y)){pins.push([x,y,rnd()<.06]);k--}}});
document.getElementById('pins').innerHTML=pins.map(p=>`<circle cx="${p[0].toFixed(1)}" cy="${p[1].toFixed(1)}" r="5"${p[2]?' opacity=".6"':''}/>`).join('');
</script>
</body>
</html>
